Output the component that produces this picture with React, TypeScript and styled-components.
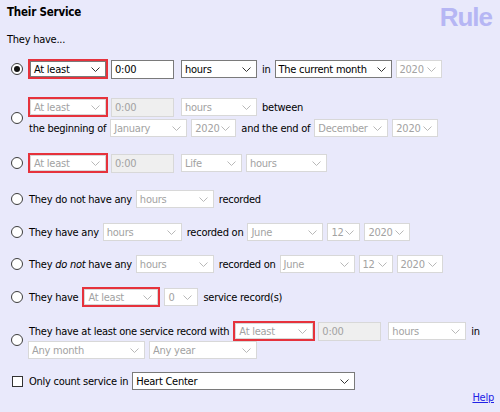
import React from "react";
import styled, { createGlobalStyle } from "styled-components";

const GlobalStyle = createGlobalStyle`
  html, body {
    margin: 0;
    background: #e9e9fb;
  }
  body {
    font-family: "DejaVu Sans Condensed", "Liberation Sans", sans-serif;
    font-stretch: condensed;
    font-size: 11px;
    letter-spacing: -0.25px;
    color: #000;
  }
`;

const Chevron = ({ off }: { off?: boolean }) => (
  <svg width="9" height="5" viewBox="0 0 9 5">
    <polyline
      points="0.5,0.5 4.5,4.5 8.5,0.5"
      fill="none"
      stroke={off ? "#b8b8b8" : "#333"}
      strokeWidth="1"
    />
  </svg>
);

const Dropdown = ({
  w,
  off,
  children,
}: {
  w: number;
  off?: boolean;
  children: React.ReactNode;
}) => (
  <SelectBox $w={w} $off={off}>
    <span>{children}</span>
    <Chevron off={off} />
  </SelectBox>
);

const App = () => {
  return (
    <Page>
      <GlobalStyle />
      <Header>
        <Title>Their Service</Title>
        <RuleMark>Rule</RuleMark>
      </Header>
      <Intro>They have...</Intro>

      <Option $mt={11}>
        <Radio $checked />
        <Lines>
          <Line>
            <Highlight>
              <Dropdown w={76}>At least</Dropdown>
            </Highlight>
            <TimeBox>0:00</TimeBox>
            <Dropdown w={76}>hours</Dropdown>
            <Label>in</Label>
            <Dropdown w={117}>The current month</Dropdown>
            <Dropdown w={46} off>
              2020
            </Dropdown>
          </Line>
        </Lines>
      </Option>

      <Option $mt={18}>
        <Radio />
        <Lines $gap={1}>
          <Line>
            <Highlight>
              <Dropdown w={76} off>
                At least
              </Dropdown>
            </Highlight>
            <TimeBox $off>0:00</TimeBox>
            <Dropdown w={76} off>
              hours
            </Dropdown>
            <Label>between</Label>
          </Line>
          <Line>
            <Label>the beginning of</Label>
            <Dropdown w={77} off>
              January
            </Dropdown>
            <Dropdown w={45} off>
              2020
            </Dropdown>
            <Label>and the end of</Label>
            <Dropdown w={74} off>
              December
            </Dropdown>
            <Dropdown w={46} off>
              2020
            </Dropdown>
          </Line>
        </Lines>
      </Option>

      <Option $mt={15}>
        <Radio />
        <Lines>
          <Line>
            <Highlight>
              <Dropdown w={76} off>
                At least
              </Dropdown>
            </Highlight>
            <TimeBox $off>0:00</TimeBox>
            <Dropdown w={61} off>
              Life
            </Dropdown>
            <Dropdown w={81} off>
              hours
            </Dropdown>
          </Line>
        </Lines>
      </Option>

      <Option $mt={16}>
        <Radio />
        <Lines>
          <Line>
            <Label>They do not have any</Label>
            <Dropdown w={78} off>
              hours
            </Dropdown>
            <Label>recorded</Label>
          </Line>
        </Lines>
      </Option>

      <Option $mt={13}>
        <Radio />
        <Lines>
          <Line>
            <Label>They have any</Label>
            <Dropdown w={79} off>
              hours
            </Dropdown>
            <Label>recorded on</Label>
            <Dropdown w={76} off>
              June
            </Dropdown>
            <Dropdown w={33} off>
              12
            </Dropdown>
            <Dropdown w={46} off>
              2020
            </Dropdown>
          </Line>
        </Lines>
      </Option>

      <Option $mt={12}>
        <Radio />
        <Lines>
          <Line>
            <Label>
              They <em>do not</em> have any
            </Label>
            <Dropdown w={78} off>
              hours
            </Dropdown>
            <Label>recorded on</Label>
            <Dropdown w={75} off>
              June
            </Dropdown>
            <Dropdown w={34} off>
              12
            </Dropdown>
            <Dropdown w={46} off>
              2020
            </Dropdown>
          </Line>
        </Lines>
      </Option>

      <Option $mt={13}>
        <Radio />
        <Lines>
          <Line>
            <Label>They have</Label>
            <Highlight>
              <Dropdown w={74} off>
                At least
              </Dropdown>
            </Highlight>
            <Dropdown w={34} off>
              0
            </Dropdown>
            <Label>service record(s)</Label>
          </Line>
        </Lines>
      </Option>

      <Option $mt={14}>
        <Radio />
        <Lines>
          <Line>
            <Label>They have at least one service record with</Label>
            <Highlight>
              <Dropdown w={78} off>
                At least
              </Dropdown>
            </Highlight>
            <TimeBox $off>0:00</TimeBox>
            <Dropdown w={78} off>
              hours
            </Dropdown>
            <Label>in</Label>
          </Line>
          <Line $h={18}>
            <Dropdown w={117} off>
              Any month
            </Dropdown>
            <Dropdown w={108} off>
              Any year
            </Dropdown>
          </Line>
        </Lines>
      </Option>

      <Option $mt={12}>
        <Check />
        <Lines>
          <Line>
            <Label>Only count service in</Label>
            <Dropdown w={223}>Heart Center</Dropdown>
          </Line>
        </Lines>
      </Option>

      <Footer>
        <HelpLink href="#">Help</HelpLink>
      </Footer>
    </Page>
  );
};

export default App;

const Page = styled.div`
  width: 500px;
  height: 412px;
  box-sizing: border-box;
  padding: 4px 6px 0 7px;
`;

const Header = styled.div`
  display: flex;
  justify-content: space-between;
  align-items: flex-start;
  height: 26px;
`;

const Title = styled.div`
  font-weight: bold;
  font-size: 11.5px;
  line-height: 16px;
  letter-spacing: -0.2px;
`;

const RuleMark = styled.div`
  font-family: "Liberation Sans", sans-serif;
  font-stretch: normal;
  font-weight: bold;
  font-size: 26px;
  line-height: 26px;
  letter-spacing: -1px;
  color: #b6b6f4;
  margin-right: 2px;
`;

const Intro = styled.div`
  margin-top: 2px;
  line-height: 16px;
`;

const Option = styled.div<{ $mt: number }>`
  display: grid;
  grid-template-columns: 21px 1fr;
  align-items: center;
  margin-top: ${(p) => p.$mt}px;
`;

const Radio = styled.span<{ $checked?: boolean }>`
  box-sizing: border-box;
  width: 12px;
  height: 12px;
  margin-left: 4px;
  border: 1px solid #3c3c3c;
  border-radius: 50%;
  background: #fff;
  display: flex;
  align-items: center;
  justify-content: center;

  &::after {
    content: "";
    display: ${(p) => (p.$checked ? "block" : "none")};
    width: 6px;
    height: 6px;
    border-radius: 50%;
    background: #111;
  }
`;

const Check = styled.span`
  box-sizing: border-box;
  width: 11px;
  height: 11px;
  margin-left: 5px;
  border: 1px solid #333;
  background: #fff;
`;

const Lines = styled.div<{ $gap?: number }>`
  display: flex;
  flex-direction: column;
  gap: ${(p) => p.$gap ?? 0}px;
`;

const Line = styled.div<{ $h?: number }>`
  display: flex;
  align-items: center;
  gap: 4px;
  height: ${(p) => p.$h ?? 20}px;
  white-space: nowrap;
`;

const Label = styled.span`
  padding-left: 1px;

  em {
    font-style: italic;
  }
`;

const SelectBox = styled.div<{ $w: number; $off?: boolean }>`
  box-sizing: border-box;
  flex: none;
  width: ${(p) => p.$w}px;
  height: 18px;
  display: flex;
  align-items: center;
  justify-content: space-between;
  padding: 0 5px 0 3px;
  background: #fff;
  border: 1px solid ${(p) => (p.$off ? "#d8d8d8" : "#7a7a7a")};
  color: ${(p) => (p.$off ? "#a2a2a2" : "#000")};
`;

const Highlight = styled.div`
  flex: none;
  display: flex;
  border: 2px solid #e6323c;

  ${SelectBox} {
    height: 16px;
  }
`;

const TimeBox = styled.div<{ $off?: boolean }>`
  box-sizing: border-box;
  flex: none;
  width: 63px;
  height: 19px;
  margin-left: -1px;
  margin-right: 3px;
  display: flex;
  align-items: center;
  padding-left: 3px;
  background: ${(p) => (p.$off ? "#efefef" : "#fff")};
  border: 1px solid ${(p) => (p.$off ? "#d8d8d8" : "#7a7a7a")};
  color: ${(p) => (p.$off ? "#a2a2a2" : "#000")};
`;

const Footer = styled.div`
  display: flex;
  justify-content: flex-end;
  line-height: 14px;
`;

const HelpLink = styled.a`
  color: #2222e6;
  text-decoration: underline;
`;
